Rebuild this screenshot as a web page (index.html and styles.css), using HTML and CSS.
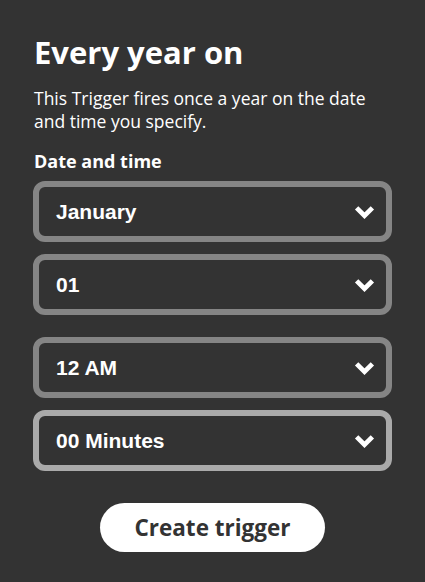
FILE: index.html
```html
<!DOCTYPE html>
<html>
<head>
	<title>Every year on</title>
	<link rel="stylesheet" href="styles.css">
</head>
<body>
	<div class="panel">
		<h1 class="title">Every year on</h1>
		<p class="desc">This Trigger fires once a year on the date and time you specify.</p>
		<div class="label">Date and time</div>

		<div class="group">
			<div class="select">
				<span>January</span>
				<svg class="chevron" viewBox="0 0 20 13"><polyline points="2.5,2.5 10,10 17.5,2.5"/></svg>
			</div>
			<div class="select">
				<span>01</span>
				<svg class="chevron" viewBox="0 0 20 13"><polyline points="2.5,2.5 10,10 17.5,2.5"/></svg>
			</div>
		</div>

		<div class="group">
			<div class="select">
				<span>12 AM</span>
				<svg class="chevron" viewBox="0 0 20 13"><polyline points="2.5,2.5 10,10 17.5,2.5"/></svg>
			</div>
			<div class="select focused">
				<span>00 Minutes</span>
				<svg class="chevron" viewBox="0 0 20 13"><polyline points="2.5,2.5 10,10 17.5,2.5"/></svg>
			</div>
		</div>

		<center><a href="#" class="create-btn">Create trigger</a></center>
	</div>
</body>
</html>
```

FILE: styles.css
```css
body {
	margin: 0;
	background-color: #333;
	color: #fff;
	font-family: 'Open Sans', sans-serif;
}
.panel {
	padding: 32px 33px 0 34px;
}
.title {
	margin: 0;
	font-size: 31px;
	line-height: 40px;
	font-weight: bold;
}
.desc {
	margin: 15px 0 0 0;
	font-size: 17.5px;
	line-height: 23px;
}
.label {
	margin-top: 16px;
	font-size: 18px;
	line-height: 24px;
	font-weight: bold;
}
.group {
	display: flex;
	flex-direction: column;
	gap: 12px;
	margin-top: 8px;
}
.group + .group {
	margin-top: 22px;
}
.select {
	display: flex;
	justify-content: space-between;
	align-items: center;
	box-sizing: border-box;
	height: 61px;
	margin-left: -1px;
	padding: 0 11px 0 17px;
	border: 6px solid #858585;
	border-radius: 12px;
	font-family: 'Liberation Sans', Arial, sans-serif;
	font-size: 21px;
	font-weight: bold;
}
.select.focused {
	border-color: #aaa;
}
.chevron {
	width: 21px;
	height: 14px;
	fill: none;
	stroke: #fff;
	stroke-width: 4.5;
}
.create-btn {
	display: inline-block;
	margin-top: 32px;
	width: 225px;
	height: 49px;
	line-height: 49px;
	border-radius: 25px;
	background-color: #fff;
	color: #333;
	font-size: 22.5px;
	font-weight: bold;
	text-decoration: none;
	margin-left: -1px;
}
```
